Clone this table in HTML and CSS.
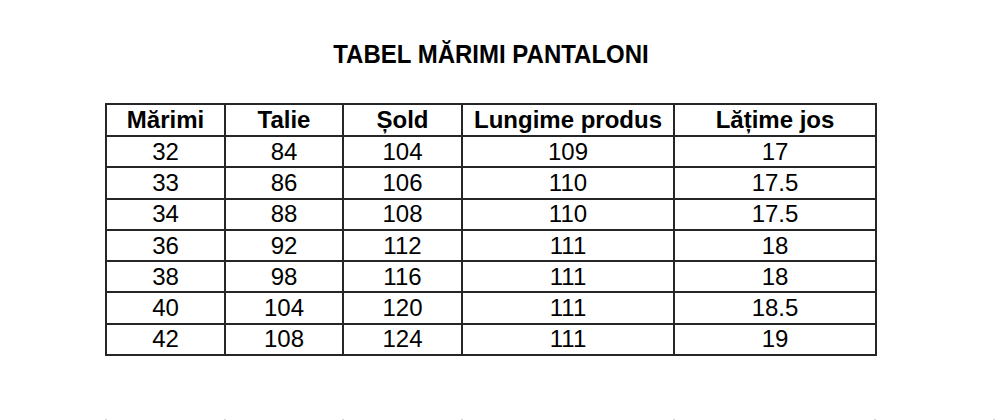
FILE: index.html
```html
<!DOCTYPE html>
<html lang="ro">
<head>
<meta charset="utf-8">
<title>Tabel mărimi pantaloni</title>
<link rel="stylesheet" href="styles.css">
</head>
<body>
<div class="sheet">
  <h1 class="title">TABEL MĂRIMI PANTALONI</h1>
  <table class="sizes">
    <colgroup>
      <col class="c1"><col class="c2"><col class="c3"><col class="c4"><col class="c5">
    </colgroup>
    <thead>
      <tr><th>Mărimi</th><th>Talie</th><th>Șold</th><th>Lungime produs</th><th>Lățime jos</th></tr>
    </thead>
    <tbody>
      <tr><td>32</td><td>84</td><td>104</td><td>109</td><td>17</td></tr>
      <tr><td>33</td><td>86</td><td>106</td><td>110</td><td>17.5</td></tr>
      <tr><td>34</td><td>88</td><td>108</td><td>110</td><td>17.5</td></tr>
      <tr><td>36</td><td>92</td><td>112</td><td>111</td><td>18</td></tr>
      <tr><td>38</td><td>98</td><td>116</td><td>111</td><td>18</td></tr>
      <tr><td>40</td><td>104</td><td>120</td><td>111</td><td>18.5</td></tr>
      <tr><td>42</td><td>108</td><td>124</td><td>111</td><td>19</td></tr>
    </tbody>
  </table>
  <div class="ticks">
    <span class="tick"></span><span class="tick"></span><span class="tick"></span><span class="tick"></span><span class="tick"></span><span class="tick"></span><span class="tick"></span>
  </div>
</div>
</body>
</html>
```
FILE: styles.css
```css
html, body {
  margin: 0;
  padding: 0;
  background: #ffffff;
}
body {
  width: 1000px;
  height: 420px;
  overflow: hidden;
  font-family: "Liberation Sans", Arial, sans-serif;
  color: #000;
}
.sheet {
  margin-left: 105px;
  width: 772px;
  padding-top: 40px;
}
.title {
  margin: 0;
  font-size: 24px;
  line-height: 28px;
  font-weight: bold;
  text-align: center;
  height: 28px;
  transform: translateY(1px) scaleY(1.06);
}
.sizes {
  margin-top: 35px;
  border-collapse: collapse;
  table-layout: fixed;
  width: 772px;
}
.c1 { width: 119px; }
.c2 { width: 118px; }
.c3 { width: 119px; }
.c4 { width: 212px; }
.c5 { width: 202px; }
.sizes th, .sizes td {
  border: 2px solid #262626;
  padding: 0;
  text-align: center;
  vertical-align: middle;
  font-size: 24px;
  line-height: 26px;
}
.sizes th {
  font-weight: bold;
  height: 30px;
}
.sizes td {
  font-weight: normal;
  height: 29.3px;
}
.ticks {
  margin-top: 63px;
  display: grid;
  grid-template-columns: 119px 118px 119px 212px 201px 119px 2px;
  height: 1px;
}
.tick {
  border-left: 2px solid #d2d2d2;
  height: 1px;
}
```
